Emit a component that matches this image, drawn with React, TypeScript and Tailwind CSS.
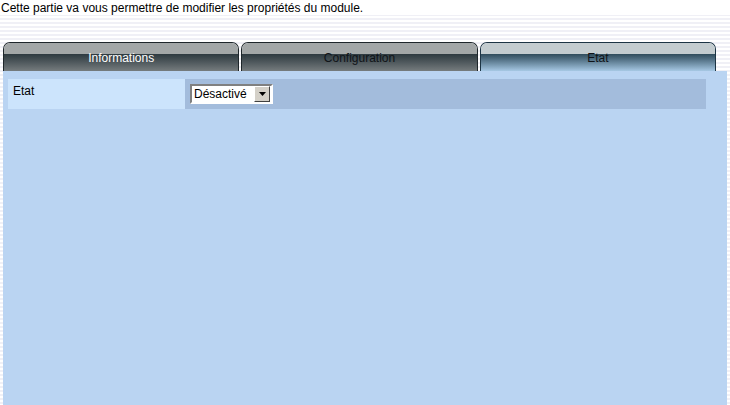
const tabs = [
  { label: "Informations", active: false, text: "text-white" },
  { label: "Configuration", active: false, text: "text-[#101418]" },
  { label: "Etat", active: true, text: "text-[#101418]" },
];

function Tab({ label, active, text }: { label: string; active: boolean; text: string }) {
  return (
    <div
      className={`relative flex h-[29px] flex-1 flex-col overflow-hidden rounded-t-[7px] border border-b-0 ${
        active ? "border-[#1c3444]" : "border-[#1e262a]"
      }`}
    >
      <div className={`h-[11px] ${active ? "bg-[#c3cccf]" : "bg-[#a3a7a7]"}`} />
      <div
        className={`flex-1 bg-gradient-to-b ${
          active ? "from-[#2f4c5c] to-[#a6c8e4]" : "from-[#2e3a40] to-[#767c7e]"
        }`}
      />
      <span className={`absolute inset-x-0 top-[8px] text-center text-[12px] leading-[14px] ${text}`}>{label}</span>
    </div>
  );
}

export default function App() {
  return (
    <div
      className="h-[405px] w-[730px] overflow-hidden bg-[repeating-linear-gradient(to_bottom,#ffffff_0px,#ffffff_2px,#f0f0f6_2px,#f0f0f6_4px)] text-[12px] text-black"
      style={{ fontFamily: '"Liberation Sans", Arial, sans-serif' }}
    >
      <p className="h-[15px] bg-white pl-[1px] pt-[1px] leading-[14px]">
        Cette partie va vous permettre de modifier les propriétés du module.
      </p>

      <div className="pl-[3px] pt-[27px]">
        <div className="flex w-[713px] gap-[2px]">
          {tabs.map((t) => (
            <Tab key={t.label} {...t} />
          ))}
        </div>

        <div className="h-[334px] w-[724px] bg-[#bad4f2] pl-[5px] pt-[8px]">
          <div className="flex h-[30px] w-[698px]">
            <div className="w-[177px] bg-[#cce4fc] pl-[5px] pt-[5px] leading-[14px]">Etat</div>
            <div className="flex-1 bg-[#a3bcdc] pl-[5px] pt-[5px]">
              <div className="flex h-[20px] w-[83px] items-center border-2 border-b-white border-l-[#808080] border-r-white border-t-[#808080] bg-white">
                <span className="flex-1 pl-[2px] leading-[14px]">Désactivé</span>
                <span className="mr-[1px] flex h-[16px] w-[16px] items-center justify-center border border-b-[#404040] border-l-white border-r-[#404040] border-t-white bg-[#d4d0c8]">
                  <svg width="7" height="4" viewBox="0 0 7 4">
                    <path d="M0 0h7L3.5 4z" fill="#000" />
                  </svg>
                </span>
              </div>
            </div>
          </div>
        </div>
      </div>
    </div>
  );
}
